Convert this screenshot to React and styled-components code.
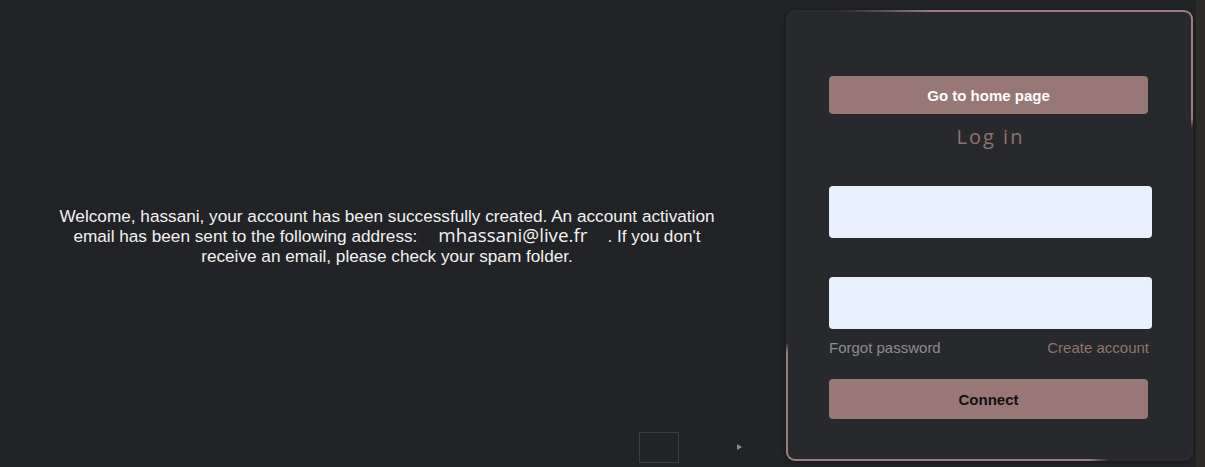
import React from "react";
import styled, { createGlobalStyle } from "styled-components";

const GlobalStyle = createGlobalStyle`
  html, body {
    margin: 0;
    padding: 0;
    background: #222327;
    overflow: hidden;
  }
`;

const Page = styled.div`
  display: flex;
  height: 467px;
  width: 1205px;
  background: #222327;
  font-family: "Liberation Sans", Arial, sans-serif;
`;

const Left = styled.div`
  width: 786px;
  display: grid;
  grid-template-rows: 1fr auto 1fr;
`;

const Message = styled.p`
  grid-row: 2;
  width: 664px;
  margin: 4px 0 0 55px;
  text-align: center;
  color: #f2f2f2;
  font-size: 17.2px;
  line-height: 20px;
`;

const Email = styled.span`
  display: inline-block;
  font-family: "Open Sans", sans-serif;
  font-size: 18.8px;
  line-height: 18px;
  padding: 0 20px 0 21px;
`;

const BottomRow = styled.div`
  grid-row: 3;
  align-self: end;
  display: flex;
  justify-content: flex-end;
  align-items: center;
  gap: 58px;
  padding: 0 44px 4px 0;
`;

const Square = styled.div`
  width: 38px;
  height: 29px;
  border: 1px solid #3b3c40;
`;

const Arrow = styled.div`
  width: 0;
  height: 0;
  border-top: 3px solid transparent;
  border-bottom: 3px solid transparent;
  border-left: 5px solid #8a8a8e;
  margin-bottom: 2px;
`;

const CardArea = styled.div`
  padding-top: 10px;
`;

const Card = styled.div`
  width: 407px;
  height: 451px;
  box-sizing: border-box;
  border: 2px solid transparent;
  border-radius: 9px;
  background:
    linear-gradient(#28292c, #28292c) padding-box,
    conic-gradient(
      from 0deg at 50% 50%,
      #9a7e7d 0deg,
      #9a7e7d 60deg,
      #2b2c2f 62deg,
      #2b2c2f 152deg,
      #9a7e7d 156deg,
      #9a7e7d 240deg,
      #2b2c2f 242deg,
      #2b2c2f 326deg,
      #9a7e7d 345deg
    ) border-box;
  box-shadow: 0 1px 4px rgba(0, 0, 0, 0.35);
  display: flex;
  flex-direction: column;
  padding: 64px 39px 0 41px;
`;

const Button = styled.button`
  width: calc(100% - 4px);
  height: ${(p) => p.$h}px;
  border: none;
  border-radius: 4px;
  background: #977876;
  color: ${(p) => p.$color};
  font-family: "Liberation Sans", Arial, sans-serif;
  font-weight: bold;
  font-size: 15px;
  cursor: pointer;
`;

const Title = styled.h2`
  margin: 11px 0 0;
  text-align: center;
  font-family: "Open Sans", sans-serif;
  font-weight: 400;
  font-size: 20px;
  line-height: 24px;
  letter-spacing: 2px;
  color: #8e7271;
`;

const Input = styled.input`
  width: 100%;
  height: 52px;
  box-sizing: border-box;
  border: none;
  border-radius: 4px;
  background: #e8f0fe;
  margin-top: ${(p) => p.$mt}px;
  outline: none;
`;

const Links = styled.div`
  display: flex;
  justify-content: space-between;
  margin: 10px 3px 22px 0;
  font-size: 15px;
  line-height: 18px;
`;

const Link = styled.a`
  color: ${(p) => p.$color};
  text-decoration: none;
  cursor: pointer;
`;

const Strip = styled.div`
  width: 9px;
  margin-left: 3px;
  background: #2c2b2a;
`;

export default function App() {
  return (
    <>
      <GlobalStyle />
      <Page>
        <Left>
          <Message>
            Welcome, hassani, your account has been successfully created. An
            account activation email has been sent to the following address:
            <Email>mhassani@live.fr</Email>. If you don't receive an email,
            please check your spam folder.
          </Message>
          <BottomRow>
            <Square />
            <Arrow />
          </BottomRow>
        </Left>
        <CardArea>
          <Card>
            <Button $h={38} $color="#ffffff">Go to home page</Button>
            <Title>Log in</Title>
            <Input $mt={37} />
            <Input $mt={39} type="password" />
            <Links>
              <Link $color="#8c8c8c">Forgot password</Link>
              <Link $color="#8f7473">Create account</Link>
            </Links>
            <Button $h={40} $color="#111111">Connect</Button>
          </Card>
        </CardArea>
        <Strip />
      </Page>
    </>
  );
}
